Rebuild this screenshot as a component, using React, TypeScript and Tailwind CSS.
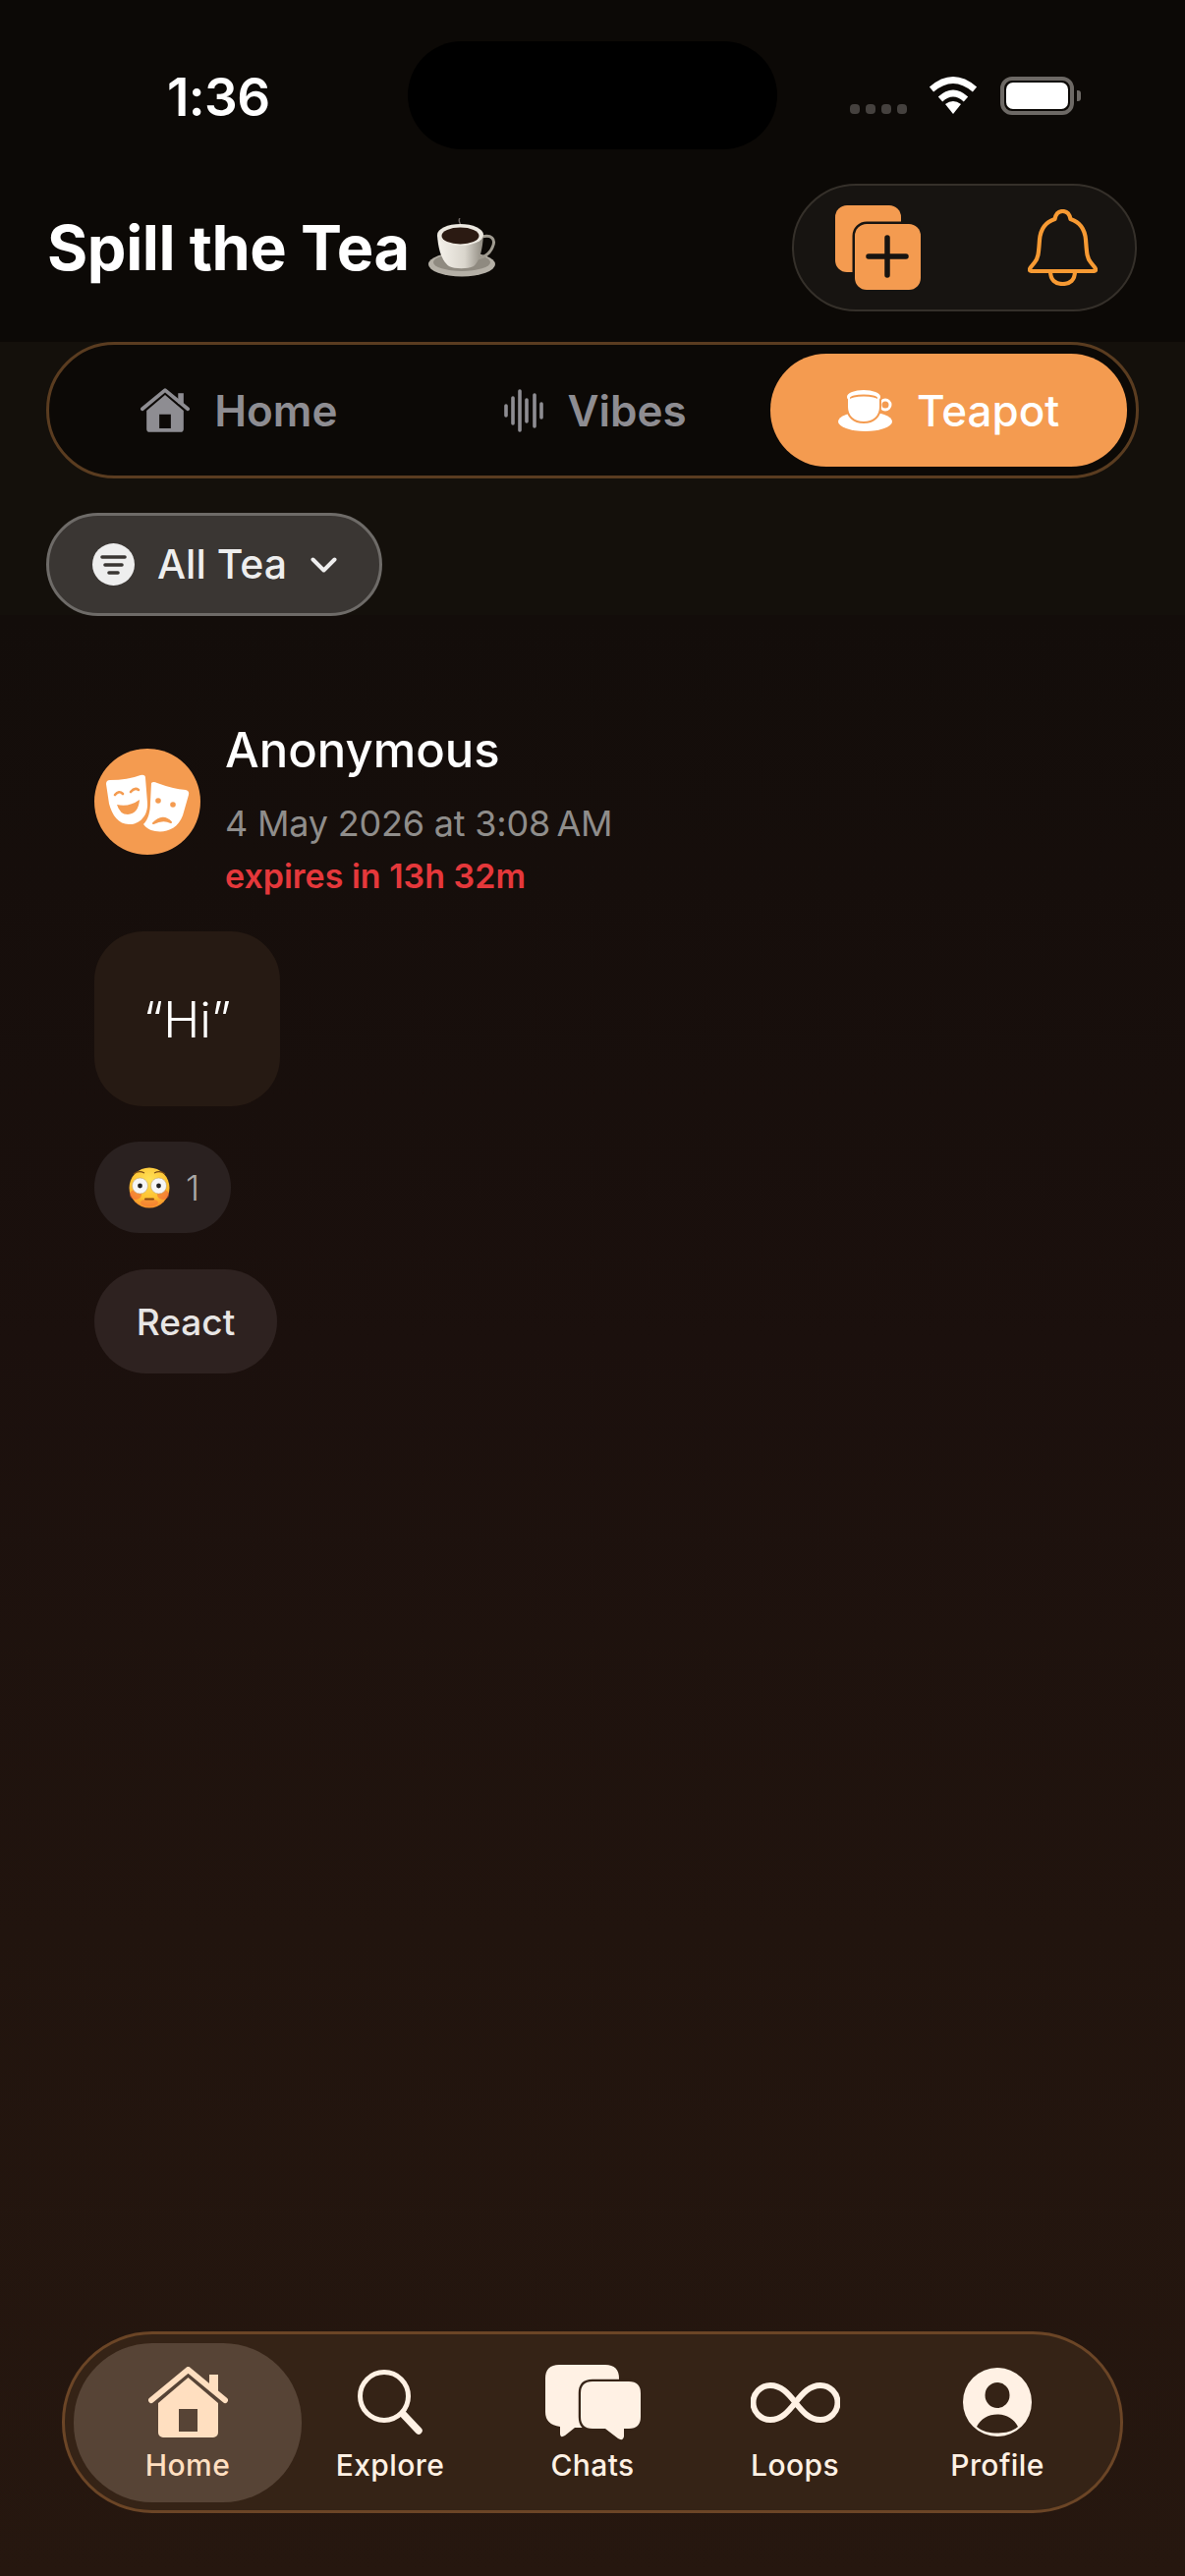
const Home = ({ className }: { className: string }) => (
  <svg viewBox="0 0 81 72" className={className} fill="currentColor">
    <path
      fillRule="evenodd"
      d="M40.5 11 L71 37 V67 a5 5 0 0 1-5 5 H15 a5 5 0 0 1-5-5 V37 Z M31 43 V66 H50 V43 Z"
    />
    <path d="M3 34 L40.5 3 L78 34" fill="none" stroke="currentColor" strokeWidth="6" strokeLinecap="round" strokeLinejoin="round" />
    <rect x="62" y="8" width="9" height="17" />
  </svg>
);

const VibesIcon = () => (
  <svg viewBox="0 0 40 44" className="w-[40px] h-[44px]" stroke="#8e8d92" strokeWidth="3.6" strokeLinecap="round">
    <path d="M2 17 V27 M9 9 V35 M16 2 V42 M23 11 V33 M31 6 V38 M38 15 V29" />
  </svg>
);

const CupIcon = () => (
  <svg viewBox="0 0 55 42" className="w-[55px] h-[42px]">
    <ellipse cx="27.5" cy="32" rx="27.5" ry="10" fill="#fff" />
    <circle cx="48" cy="15" r="5" fill="none" stroke="#fff" strokeWidth="3" />
    <path d="M9 7 V17 C9 27 16 33 26 33 C36 33 43 27 43 17 V7 Z" fill="#fff" stroke="#f49b50" strokeWidth="2" />
    <ellipse cx="26" cy="7" rx="17" ry="7" fill="#fff" />
    <ellipse cx="26" cy="8" rx="14" ry="3.6" fill="#f49b50" />
    <ellipse cx="26" cy="10" rx="14" ry="3.4" fill="#fff" />
  </svg>
);

const CoffeeEmoji = () => (
  <svg viewBox="0 0 70 60" className="w-[70px] h-[60px]">
    <defs>
      <linearGradient id="mug" x1="0" x2="1" y1="0" y2="0">
        <stop offset="0" stopColor="#f6f3ec" />
        <stop offset="0.6" stopColor="#d9d5cc" />
        <stop offset="1" stopColor="#8d887e" />
      </linearGradient>
    </defs>
    <path d="M33 0 C30 4 36 6 33 11" fill="none" stroke="#6b6460" strokeWidth="1.5" />
    <ellipse cx="35" cy="47" rx="34" ry="12.5" fill="#b5b0a6" />
    <ellipse cx="35" cy="45" rx="29" ry="9" fill="#8f8a80" />
    <path d="M52 20 C66 15 70 22 66 30 C63 37 57 40 51 41" fill="none" stroke="#a09b90" strokeWidth="3" />
    <path d="M10 17 C11 33 15 44 22 49 C28 52 41 52 47 49 C53 44 56 33 57 17 Z" fill="url(#mug)" />
    <ellipse cx="33.5" cy="17" rx="23.5" ry="11" fill="#ece8e0" />
    <ellipse cx="33.5" cy="18" rx="19" ry="8.5" fill="#2b1a12" />
  </svg>
);

const FlushedEmoji = () => (
  <svg viewBox="0 0 42 42" className="w-[42px] h-[42px]">
    <defs>
      <radialGradient id="face" cx="0.5" cy="0.3" r="0.8">
        <stop offset="0" stopColor="#ffe257" />
        <stop offset="0.6" stopColor="#fdc02f" />
        <stop offset="1" stopColor="#f4792b" />
      </radialGradient>
    </defs>
    <circle cx="21" cy="21" r="20.5" fill="url(#face)" />
    <ellipse cx="7" cy="28" rx="6" ry="5" fill="#f0603a" opacity="0.55" />
    <ellipse cx="35" cy="28" rx="6" ry="5" fill="#f0603a" opacity="0.55" />
    <ellipse cx="21" cy="36" rx="9" ry="4" fill="#f0603a" opacity="0.4" />
    <circle cx="11.5" cy="19" r="8" fill="#f6f6f6" stroke="#b49a6a" strokeWidth="0.5" />
    <circle cx="30.5" cy="19" r="8" fill="#f6f6f6" stroke="#b49a6a" strokeWidth="0.5" />
    <circle cx="11.5" cy="19" r="2.4" fill="#222" />
    <circle cx="30.5" cy="19" r="2.4" fill="#222" />
    <path d="M5 7 Q10 3 16 6 M26 6 Q32 3 37 7" fill="none" stroke="#7a4a14" strokeWidth="1.2" />
    <rect x="16" y="31.5" width="10" height="2" rx="1" fill="#8a4a14" />
  </svg>
);

const Masks = () => (
  <svg viewBox="0 0 108 108" className="w-[108px] h-[108px]">
    <path
      d="M58 35 Q60 33 64 35 Q80 41 93 42 Q97 43 96 47 L90 68 C85 82 72 86 62 84 C56 83 52 80 50 77 C55 72 57 64 57 55 Z"
      fill="#fff"
    />
    <circle cx="65" cy="53" r="2.8" fill="#f49b50" />
    <circle cx="80" cy="57" r="2.8" fill="#f49b50" />
    <path d="M60 76 Q70 66 78 75 Q70 71 60 76 Z" fill="#f49b50" stroke="#f49b50" strokeWidth="2" strokeLinejoin="round" />
    <path
      d="M12 36 Q12 32 16 32 Q34 32 47 27 Q52 26 52 30 L54 55 C55 70 44 78 35 77 C25 77 18 68 15 56 Z"
      fill="#fff"
    />
    <path d="M21 47 Q25 42 29 46 M37 44 Q41 39 45 42" fill="none" stroke="#f49b50" strokeWidth="2.6" strokeLinecap="round" />
    <path d="M23 57 Q35 60 46 52 Q45 66 34 67 Q26 67 23 57 Z" fill="#f49b50" />
  </svg>
);

const navItems = ["Explore", "Chats", "Loops", "Profile"];

const NavIcon = ({ name }: { name: string }) => {
  if (name === "Explore") {
    return (
      <svg viewBox="0 0 66 66" className="w-[66px] h-[66px]" fill="none" stroke="#fff1e4">
        <circle cx="27" cy="27" r="24.5" strokeWidth="5" />
        <path d="M46 45 L62 62" strokeWidth="7.5" strokeLinecap="round" />
      </svg>
    );
  }
  if (name === "Chats") {
    return (
      <svg viewBox="0 0 97 77" className="w-[97px] h-[77px]" fill="#fff1e4">
        <path d="M14 0 H61 Q75 0 75 14 V50 Q75 64 61 64 H30 L20 72 Q15 75 15 70 V63 Q0 61 0 48 V14 Q0 0 14 0 Z" />
        <path
          d="M48 17 H85 Q97 17 97 29 V53 Q97 65 85 65 H80 V73 Q79 78 74 75 L61 65 H48 Q36 65 36 53 V29 Q36 17 48 17 Z"
          stroke="#352316"
          strokeWidth="4.5"
          paintOrder="stroke"
        />
      </svg>
    );
  }
  if (name === "Loops") {
    return (
      <svg viewBox="0 0 91 41" className="w-[91px] h-[41px]" fill="none" stroke="#fff1e4" strokeWidth="6">
        <path d="M45.5 20.5 C38 11 31 3 20 3 A17.5 17.5 0 0 0 20 38 C31 38 38 30 45.5 20.5 C53 11 60 3 71 3 A17.5 17.5 0 0 1 71 38 C60 38 53 30 45.5 20.5 Z" />
      </svg>
    );
  }
  return (
    <svg viewBox="0 0 70 70" className="w-[70px] h-[70px]" fill="#fff1e4">
      <path
        fillRule="evenodd"
        d="M35 0 A35 35 0 1 1 35 70 A35 35 0 1 1 35 0 Z M35 15 A12.5 13 0 1 0 35 41 A12.5 13 0 1 0 35 15 Z M14 60 C20 65 27 66.5 35 66.5 C43 66.5 50 65 56 60 C52 52 44 47.5 35 47.5 C26 47.5 18 52 14 60 Z"
      />
    </svg>
  );
};

export default function App() {
  return (
    <div className="w-[1206px] h-[2622px] flex flex-col text-white [font-family:Inter,sans-serif] bg-[linear-gradient(180deg,#120c09_0%,#130d0a_24%,#1b100d_52%,#21140e_75%,#26170f_100%)]">
      <header className="h-[348px] bg-[#0c0906]">
        <div className="flex pt-[42px] h-[152px]">
          <div className="w-[415px] pl-[170px] pt-[26px] text-[53px] leading-[62px] font-semibold tracking-[-0.6px]">1:36</div>
          <div className="w-[376px] h-[110px] rounded-[55px] bg-black" />
          <div className="flex-1 flex items-start pl-[74px] pt-[36px]">
            <div className="flex gap-[6px] mt-[28px]">
              {[0, 1, 2, 3].map((i) => (
                <div key={i} className="w-[10px] h-[10px] rounded-[4px] bg-[#45413e]" />
              ))}
            </div>
            <svg viewBox="0 0 50 38" className="w-[50px] h-[38px] ml-[22px]" fill="none" stroke="#fff" strokeWidth="6.5">
              <path d="M3 13 Q25 -6 47 13 M12 23 Q25 11 38 23" />
              <path d="M17 28 Q25 22 33 28 L25 38 Z" fill="#fff" stroke="none" />
            </svg>
            <div className="ml-[23px] w-[75px] h-[39px] rounded-[12px] border-[4px] border-[#6d6965] p-[2px]">
              <div className="w-full h-full rounded-[7px] bg-white" />
            </div>
            <div className="w-[4px] h-[11px] mt-[14px] ml-[3px] rounded-r-[3px] bg-[#6d6965]" />
          </div>
        </div>
        <div className="flex items-center justify-between pl-[48px] pr-[49px] pt-[35px]">
          <div className="flex items-center gap-[18px]">
            <span className="text-[63px] leading-[76px] font-bold tracking-[-0.4px]">Spill the Tea</span>
            <CoffeeEmoji />
          </div>
          <div className="w-[351px] h-[130px] rounded-[65px] bg-[#171411] border-2 border-[#35302a] flex items-center pl-[42px]">
            <svg viewBox="0 0 87 86" className="w-[87px] h-[86px]">
              <rect width="67" height="68" rx="12" fill="#f49b50" />
              <rect x="20" y="19" width="67" height="67" rx="12" fill="#f49b50" stroke="#171411" strokeWidth="5" paintOrder="stroke" />
              <path d="M34 52 H72 M53 33 V71" stroke="#171411" strokeWidth="5.5" strokeLinecap="round" />
            </svg>
            <svg viewBox="0 0 71 78" className="w-[71px] h-[78px] ml-[109px]" fill="none" stroke="#f79a33" strokeWidth="4.2" strokeLinejoin="round">
              <path d="M35.5 2 C31 2 28.5 5 27.5 10 C18 13 13 20 12 31 C11 44 11 49 7 54 L3 59 Q0 63 5 63 H66 Q71 63 68 59 L64 54 C60 49 60 44 59 31 C58 20 53 13 43.5 10 C42.5 5 40 2 35.5 2 Z" />
              <path d="M23 63 C23 72 28 76 35.5 76 C43 76 48 72 48 63" />
            </svg>
          </div>
        </div>
      </header>

      <section className="h-[278px] bg-[#14100b] pl-[47px]">
        <div className="w-[1112px] h-[139px] rounded-[70px] border-[3px] border-[#5a3c20] bg-[#0c0906] grid grid-cols-3 p-[9px] text-[44px] font-semibold">
          <div className="flex items-center justify-center gap-[25px] pl-[6px] text-[#8e8d92]">
            <Home className="w-[50px] h-[45px]" />
            <span>Home</span>
          </div>
          <div className="flex items-center justify-center gap-[24px] pl-[6px] text-[#8e8d92]">
            <VibesIcon />
            <span>Vibes</span>
          </div>
          <div className="flex items-center justify-center gap-[25px] rounded-[57px] bg-[#f49b50]">
            <CupIcon />
            <span className="font-medium">Teapot</span>
          </div>
        </div>
        <div className="mt-[35px] w-[342px] h-[105px] rounded-[53px] bg-[#3a3633] border-[3px] border-[#6e6b68] flex items-center pl-[44px] text-[#eeeeee]">
          <svg viewBox="0 0 43 43" className="w-[43px] h-[43px]">
            <circle cx="21.5" cy="21.5" r="21.5" fill="#eeeeee" />
            <path d="M10 14 H33 M13 22 H30 M17 30 H26" stroke="#3a3633" strokeWidth="3.6" strokeLinecap="round" />
          </svg>
          <span className="ml-[23px] text-[41px] font-medium">All Tea</span>
          <svg viewBox="0 0 27 16" className="w-[27px] h-[16px] ml-[24px]" fill="none" stroke="#eeeeee" strokeWidth="4" strokeLinecap="round" strokeLinejoin="round">
            <path d="M2.5 2.5 L13.5 13.5 L24.5 2.5" />
          </svg>
        </div>
      </section>

      <main className="flex-1 px-[96px] pt-[109px]">
        <div className="flex items-start gap-[25px]">
          <div className="mt-[27px] w-[108px] h-[108px] rounded-full bg-[#f49b50]">
            <Masks />
          </div>
          <div>
            <div className="text-[49px] leading-[58px] font-medium">Anonymous</div>
            <div className="mt-[23px] text-[36px] leading-[44px] text-[#8f8d8b] tracking-[-0.2px]">4 May 2026 at 3:08{"\u202f"}AM</div>
            <div className="mt-[12px] text-[34px] leading-[40px] font-semibold text-[#e5383b]">expires in 13h 32m</div>
          </div>
        </div>
        <div className="mt-[36px] w-[189px] h-[178px] rounded-[50px] bg-[#261a13] flex items-center justify-center pt-[3px] text-[50px] font-light">
          “Hi”
        </div>
        <div className="mt-[36px] w-[139px] h-[93px] rounded-[46px] bg-[#2a2120] flex items-center pl-[35px] gap-[16px] pt-[1px] text-[36px] font-light text-[#aaa8a6]">
          <FlushedEmoji />
          <span>1</span>
        </div>
        <div className="mt-[37px] w-[186px] h-[106px] rounded-[53px] bg-[#2e2220] flex items-center justify-center pt-[2px] text-[37px] font-medium text-[#e8e6e5]">
          React
        </div>
      </main>

      <nav className="mx-[63px] mb-[64px] w-[1080px] h-[185px] rounded-[92px] border-[3px] border-[#6b4526] bg-[#352316] grid grid-cols-5 px-[22px] pt-[9px] pb-[8px] text-[30px] leading-[36px] font-medium tracking-[0.4px] text-[#fff1e4]">
        <div className="-mx-[13px] rounded-[80px] bg-[#574436] flex flex-col items-center pt-[21px] text-[#ffdfc0]">
          <div className="h-[78px] flex items-center justify-center">
            <Home className="w-[81px] h-[72px]" />
          </div>
          <span className="mt-[7px]">Home</span>
        </div>
        {navItems.map((name) => (
          <div key={name} className="flex flex-col items-center pt-[21px]">
            <div className="h-[78px] flex items-center justify-center">
              <NavIcon name={name} />
            </div>
            <span className="mt-[7px]">{name}</span>
          </div>
        ))}
      </nav>
    </div>
  );
}
